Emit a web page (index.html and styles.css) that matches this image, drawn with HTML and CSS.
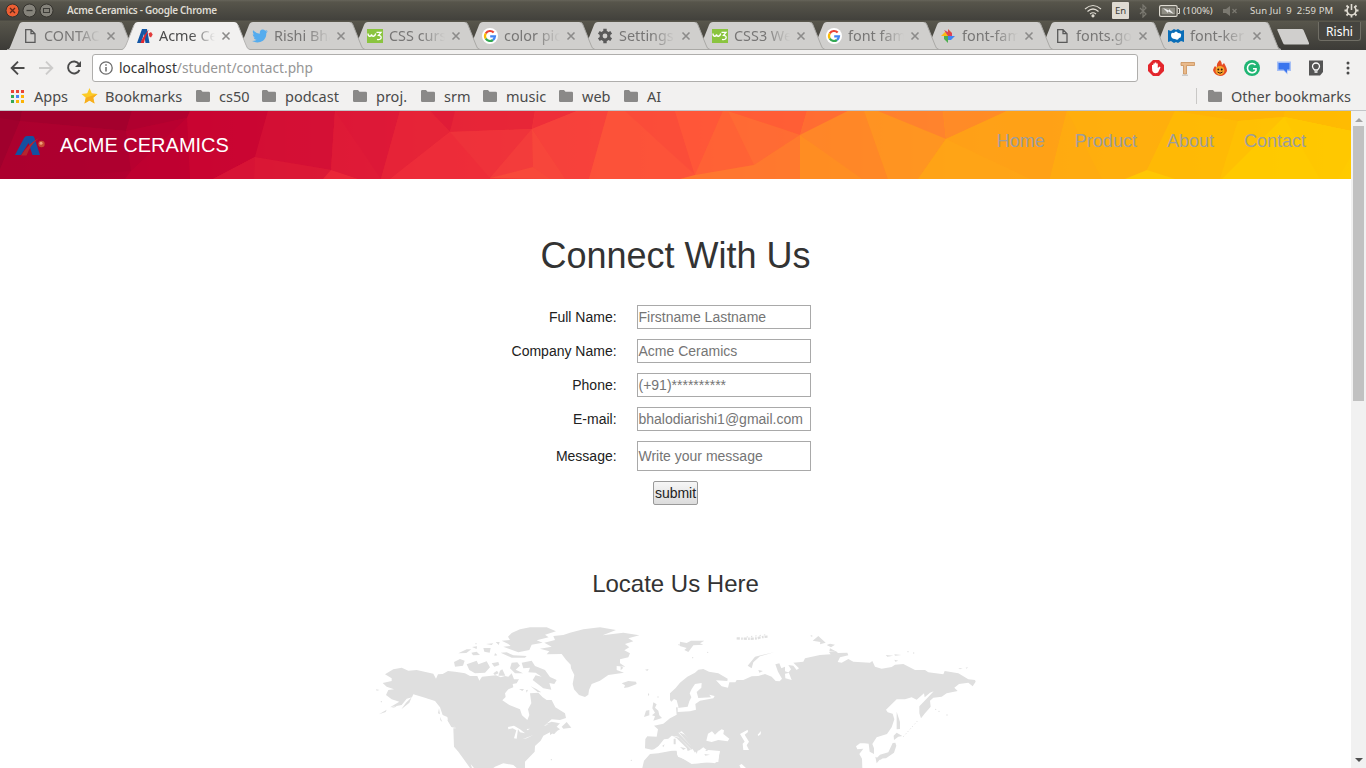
FILE: index.html
```html
<!DOCTYPE html>
<html lang="en">
<head>
<meta charset="utf-8">
<title>Acme Ceramics</title>
<link rel="stylesheet" href="styles.css">
</head>
<body>
<svg width="0" height="0" class="defs">
  <defs>
    <symbol id="tab" viewBox="0 0 128 28"><path d="M0 28C3 27 3 25 4 23L12 3Q13 0 16 0H112Q115 0 116 3L124 23Q125 27 128 28Z" fill="#d0cfcd"/><path d="M0 27.5H128M114 .5Q115.500 1 116 3L124 23Q125 27 128 27.500" fill="none" stroke="#aaa9a6"/></symbol>
    <symbol id="tab-on" viewBox="0 0 128 28"><path d="M0 28C3 27 3 25 4 23L12 3Q13 0 16 0H112Q115 0 116 3L124 23Q125 27 128 28Z" fill="#f2f1f0"/><path d="M0 27.500Q3 26 4 23L12 3M116 3L124 23Q125 27 128 27.500" fill="none" stroke="#b5b4b2"/></symbol>
    <symbol id="close" viewBox="0 0 10 10"><path d="M1.500 1.500L8.500 8.500M8.500 1.500L1.500 8.500" stroke="#8c8b8a" stroke-width="1.600"/></symbol>
    <symbol id="page" viewBox="0 0 16 16"><path d="M3.700 1.700H9L13 5.700V14.300H3.700ZM9 1.700V5.700H13" fill="none" stroke="#5a5a5a" stroke-width="1.300"/></symbol>
    <symbol id="acme" viewBox="0 0 30 20"><path d="M0 19L9 2Q10 0 12 0H17.500Q19 0 19.500 2L25 19H17.500L13.500 7L6 19Z" fill="#1450a0"/><path d="M6 19.500Q14 7 24 2Q15 9 11.500 19.500Z" fill="#b5252e"/><circle cx="26.500" cy="8" r="3.200" fill="#c94b35"/><circle cx="26" cy="7.200" r="1.500" fill="#efa27c"/></symbol>
    <symbol id="acme-tab" viewBox="0 0 16 16"><path d="M0 15L5 1H10L12.500 15H8.500L7 6L4 15Z" fill="#1457a5"/><path d="M3.500 15Q6 8 12 1.500Q8 9 7 15Z" fill="#e02830"/><path d="M11.500 5.500L14 4L15.700 6.500L14 9.500L12.300 8.500Z" fill="#e23b3b"/></symbol>
    <symbol id="w3" viewBox="0 0 16 16"><path d="M0 1H16V15H0Z" fill="#8ac43f"/><path d="M1 5.500C1 9 4 9 4.500 6.500C5 9 8 9 8.700 5.500M9.500 4.300H14L11.500 7.300C15.500 7.300 15 12.700 10 11.300" fill="none" stroke="#fff" stroke-width="1.300"/></symbol>
    <symbol id="google" viewBox="0 0 16 16"><circle cx="8" cy="8" r="8" fill="#fff"/><g fill="none" stroke-width="2.200"><path d="M11.700 4.600A5 5 0 0 0 3.800 5.300" stroke="#ea4335"/><path d="M3.800 5.300A5 5 0 0 0 3.800 10.700" stroke="#fbbc05"/><path d="M3.800 10.700A5 5 0 0 0 11 12" stroke="#34a853"/><path d="M11 12A5 5 0 0 0 13 8.300H8.200" stroke="#4285f4"/></g></symbol>
    <symbol id="folder" viewBox="0 0 14 12"><path d="M0 1.200Q0 0 1.200 0H5L6.500 1.700H12.800Q14 1.700 14 2.900V10.800Q14 12 12.800 12H1.200Q0 12 0 10.800Z" fill="#8a8988"/></symbol>
  </defs>
</svg>

<header class="titlebar">
  <svg class="winbtns" width="56" height="21" viewBox="0 0 56 21"><circle cx="12.500" cy="10.500" r="6.500" fill="#ec5e33" stroke="#35332e"/><path d="M10 8L15 13M15 8L10 13" stroke="#61281a" stroke-width="1.300"/><circle cx="29.500" cy="10.500" r="6.500" fill="#85837b" stroke="#35332e"/><path d="M26.500 10.500H32.500" stroke="#3d3c38" stroke-width="1.300"/><circle cx="46.500" cy="10.500" r="6.500" fill="#85837b" stroke="#35332e"/><rect x="43.500" y="8.500" width="6" height="4" fill="none" stroke="#3d3c38"/></svg>
  <span class="wintitle">Acme Ceramics - Google Chrome</span>
  <div class="tray">
    <svg width="18" height="14" viewBox="0 0 18 14" fill="none" stroke="#dfdbd2" stroke-width="1.200"><path d="M1 5Q9-2 17 5M3.500 7.500Q9 2.500 14.500 7.500M6 10Q9 7.500 12 10"/><circle cx="9" cy="11.800" r="1" fill="#dfdbd2"/></svg>
    <span class="lang">En</span>
    <svg class="bt" width="8" height="14" viewBox="0 0 8 14" fill="none" stroke="#7b7971" stroke-width="1.200"><path d="M1 4L7 10L4 13V1L7 4L1 10"/></svg>
    <svg class="bat" width="21" height="12" viewBox="0 0 21 12"><rect x=".6" y=".6" width="17.500" height="10.800" rx="1.500" fill="none" stroke="#dfdbd2" stroke-width="1.200"/><rect x="2.500" y="2.500" width="13.700" height="7" fill="#8f8d84"/><path d="M19 3.500H20.500V8.500H19" fill="none" stroke="#dfdbd2"/><path d="M4 3L10 5.500V4L15 9L9 6.500V8Z" fill="#eee"/></svg>
    <span class="pct">(100%)</span>
    <svg class="vol" width="15" height="10" viewBox="0 0 15 10"><path d="M0 3H3L7 0V10L3 7H0Z" fill="#7b7971"/><path d="M9.500 3L13.500 7M13.500 3L9.500 7" stroke="#7b7971" stroke-width="1.200"/></svg>
    <span class="clock">Sun Jul&nbsp; 9&nbsp; 2:59 PM</span>
    <svg class="gear" width="15" height="15" viewBox="0 0 15 15" fill="none" stroke="#dfdbd2"><path d="M5 3.700A4.500 4.500 0 1 0 10 3.700M7.500 1V7" stroke-width="1.600"/><path d="M.5 7.500H3M12 7.500H14.500M7.500 12V14.500M2.500 2.500L4.300 4.300M12.500 2.500L10.700 4.300M2.500 12.500L4.300 10.700M12.500 12.500L10.700 10.700" stroke-width="1.800"/></svg>
  </div>
</header>

<nav class="tabstrip">
  <div class="tab t1"><svg class="shape"><use href="#tab"/></svg><svg class="fav"><use href="#page"/></svg><span>CONTACT</span><svg class="x"><use href="#close"/></svg></div>
  <div class="tab active"><svg class="shape"><use href="#tab-on"/></svg><svg class="fav"><use href="#acme-tab"/></svg><span>Acme Cer</span><svg class="x"><use href="#close"/></svg></div>
  <div class="tab t3"><svg class="shape"><use href="#tab"/></svg><svg class="fav" viewBox="0 0 16 16"><path d="M0 13Q3 13 4.500 11.700Q2.200 11.500 1.600 9.500H3Q.7 8.500.7 6.200L2.100 6.500Q.1 4.500 1.200 2.200Q4 5.500 7.800 5.700Q7.500 2 10.500 1.600Q12 1.500 13.200 2.700L15.300 1.900L14 3.700L16 3.300L14.300 5Q14.500 10 11 12.700Q6 16 0 13Z" fill="#55acee"/></svg><span>Rishi Bha</span><svg class="x"><use href="#close"/></svg></div>
  <div class="tab t4"><svg class="shape"><use href="#tab"/></svg><svg class="fav"><use href="#w3"/></svg><span>CSS curs</span><svg class="x"><use href="#close"/></svg></div>
  <div class="tab t5"><svg class="shape"><use href="#tab"/></svg><svg class="fav"><use href="#google"/></svg><span>color pic</span><svg class="x"><use href="#close"/></svg></div>
  <div class="tab t6"><svg class="shape"><use href="#tab"/></svg><svg class="fav" viewBox="0 0 16 16"><circle cx="8" cy="8" r="3.900" fill="none" stroke="#5a5a5a" stroke-width="3"/><path d="M8 .8V4M8 12V15.200M1.800 4.400L4.500 6M11.500 10L14.200 11.600M1.800 11.600L4.500 10M11.500 6L14.200 4.400" stroke="#5a5a5a" stroke-width="3.400"/></svg><span>Settings</span><svg class="x"><use href="#close"/></svg></div>
  <div class="tab near t7"><svg class="shape"><use href="#tab"/></svg><svg class="fav"><use href="#w3"/></svg><span>CSS3 We</span><svg class="x"><use href="#close"/></svg></div>
  <div class="tab near t8"><svg class="shape"><use href="#tab"/></svg><svg class="fav"><use href="#google"/></svg><span>font fam</span><svg class="x"><use href="#close"/></svg></div>
  <div class="tab near t9"><svg class="shape"><use href="#tab"/></svg><svg class="fav" viewBox="0 0 16 16"><path d="M8 8V1L12 5V8Z" fill="#e04a3f"/><path d="M8 8H15L11 12H8Z" fill="#4285f4"/><path d="M8 8V15L4 11V8Z" fill="#4caf50"/><path d="M8 8H1L5 4H8Z" fill="#fbb917"/><path d="M4 2L8 4V8ZM12 5L12 8H8Z" fill="#d84060"/></svg><span>font-fam</span><svg class="x"><use href="#close"/></svg></div>
  <div class="tab near t10"><svg class="shape"><use href="#tab"/></svg><svg class="fav"><use href="#page"/></svg><span>fonts.go</span><svg class="x"><use href="#close"/></svg></div>
  <div class="tab near t11"><svg class="shape"><use href="#tab"/></svg><svg class="fav" viewBox="0 0 16 16"><path d="M0 2L3 3L6 1L8 2L10 1L13 3L16 2V14L13 13L10 15L8 14L6 15L3 13L0 14Z" fill="#0a6eb8"/><path d="M3 7Q3 4 6 5Q8 2 10 5Q14 5 13 8Q13 10 11 10Q10 13 7 11Q3 11 3 7Z" fill="#fff"/></svg><span>font-ker</span><svg class="x"><use href="#close"/></svg></div>
  <svg class="newtab" width="33" height="16" viewBox="0 0 33 16"><path d="M1 0H24.500Q26 0 26.500 1L32 14Q32.500 15.500 31 15.500H8Q6.500 15.500 6 14L.3 1Q0 0 1 0Z" fill="#d0cfcd"/></svg>
  <span class="user">Rishi</span>
</nav>

<div class="toolbar">
  <svg width="84" height="28" viewBox="0 0 84 28" fill="none" stroke-width="1.900"><path d="M24.500 14H12M18 7.700L11.700 14L18 20.300" stroke="#4a4a4a"/><path d="M39 14H51.500M46 7.700L52.300 14L46 20.300" stroke="#cccbca"/><path d="M79 10A6 6 0 1 0 79.500 16" stroke="#4a4a4a"/><path d="M81 7V13H75Z" fill="#4a4a4a"/></svg>
  <div class="omnibox"><svg width="14" height="14" viewBox="0 0 14 14"><circle cx="7" cy="7" r="6.200" fill="none" stroke="#6b6b6b" stroke-width="1.300"/><path d="M7 6V10.500M7 3.200V4.800" stroke="#6b6b6b" stroke-width="1.500"/></svg><span class="url"><b>localhost</b>/student/contact.php</span></div>
  <div class="exts">
    <svg viewBox="0 0 16 16"><path d="M5 0H11L16 5V11L11 16H5L0 11V5Z" fill="#e3262c"/><path d="M4 8V5H5.300V7V3.500H6.800V7V2.500H8.300V7V3.500H9.800V8L11.500 6.500L12.500 7.500L10 12.500Q6 14.500 4.300 11Z" fill="#fff"/></svg>
    <svg viewBox="0 0 16 16"><path d="M1 2.500H14.500V5.500H6.500V14H3.500V5.500H1Z" fill="#e9b98a" stroke="#c98f57" stroke-width=".8"/><path d="M2 15.200H8" stroke="#bbb"/></svg>
    <svg viewBox="0 0 16 16"><path d="M8 0Q10 2 10 5L12 3Q15 8 15 11Q13 16 8 16Q2 15 1 10Q2 7 3 6L5 8Q4 3 8 0Z" fill="#e54b23"/><circle cx="8" cy="10.500" r="4.500" fill="#f7a52c"/><circle cx="6.300" cy="9.500" r="1" fill="#331b10"/><circle cx="9.700" cy="9.500" r="1" fill="#331b10"/><path d="M5.500 12Q8 14.500 10.500 12" stroke="#331b10" fill="none"/></svg>
    <svg viewBox="0 0 16 16"><circle cx="8" cy="8" r="8" fill="#1fb573"/><path d="M11.500 5A4.600 4.600 0 1 0 12 10.500V8.700H9" stroke="#fff" stroke-width="1.600" fill="none"/></svg>
    <svg viewBox="0 0 16 16"><path d="M1 1.500H15V11H11.500V14.500L8 11H1Z" fill="#a7c0f5"/><path d="M2.500 3H13.500V9.500H11V13L7.500 9.500H2.500Z" fill="#3974ee"/></svg>
    <svg viewBox="0 0 16 16"><path d="M1 .5H15V12L12 15.500H1Z" fill="#555"/><path d="M6.500 10C5 8.500 4.500 8 4.500 6.500A3.500 3.500 0 0 1 11.500 6.500C11.500 8 11 8.500 9.500 10ZM6.500 12H9.500" fill="none" stroke="#fff" stroke-width="1.300"/></svg>
    <svg viewBox="0 0 16 16" fill="#4a4a4a"><circle cx="8" cy="3" r="1.500"/><circle cx="8" cy="8" r="1.500"/><circle cx="8" cy="13" r="1.500"/></svg>
  </div>
</div>

<div class="bookmarks">
  <svg class="apps" width="13" height="13" viewBox="0 0 13 13"><path d="M0 0H3V3H0ZM5 0H8V3H5ZM10 0H13V3H10Z" fill="#ea4335"/><path d="M0 5H3V8H0ZM0 10H3V13H0Z" fill="#34a853"/><path d="M5 5H8V8H5Z" fill="#4285f4"/><path d="M10 5H13V8H10ZM5 10H8V13H5ZM10 10H13V13H10Z" fill="#fbb305"/></svg>
  <span class="w-apps">Apps</span>
  <svg class="star" width="17" height="16" viewBox="0 0 17 16"><path d="M8.500 0L10.800 5.300L16.500 5.900L12.200 9.700L13.500 15.500L8.500 12.500L3.500 15.500L4.800 9.700L.5 5.900L6.200 5.300Z" fill="#fccb27"/><path d="M8.500 12.500L3.500 15.500L4.800 9.700L16.500 5.900L12.200 9.700L13.500 15.500Z" fill="#f7ad1e"/></svg>
  <span class="w-bm">Bookmarks</span>
  <svg class="folder"><use href="#folder"/></svg><span class="w-cs">cs50</span>
  <svg class="folder"><use href="#folder"/></svg><span class="w-pod">podcast</span>
  <svg class="folder"><use href="#folder"/></svg><span class="w-proj">proj.</span>
  <svg class="folder"><use href="#folder"/></svg><span class="w-srm">srm</span>
  <svg class="folder"><use href="#folder"/></svg><span class="w-mus">music</span>
  <svg class="folder"><use href="#folder"/></svg><span class="w-web">web</span>
  <svg class="folder"><use href="#folder"/></svg><span class="w-ai">AI</span>
  <div class="other"><svg class="folder"><use href="#folder"/></svg><span>Other bookmarks</span></div>
</div>

<div class="viewport">
<main>
  <div class="banner">
    <svg class="poly" viewBox="0 0 1351 68" preserveAspectRatio="none">
      <defs><linearGradient id="bg"><stop offset="0" stop-color="#a2002e"/><stop offset=".1" stop-color="#b40030"/><stop offset=".14" stop-color="#c20030"/><stop offset=".3" stop-color="#e92a39"/><stop offset=".5" stop-color="#ff5838"/><stop offset=".7" stop-color="#ff9d1a"/><stop offset="1" stop-color="#ffcb00"/></linearGradient></defs>
      <path d="M0 0H1351V68H0Z" fill="url(#bg)"/>
      <g opacity=".88">
      <path d="M0 0H22L20 10L0 58Z" fill="#a0002d"/><path d="M0 0H22L20 10L0 7Z" fill="#98002b"/><path d="M22 0H132L126 20L20 10Z" fill="#a3002d"/><path d="M20 10L126 20L131 60L28 68H0V58Z" fill="#ae002f"/><path d="M132 0H190L187 7L126 20Z" fill="#b0002f"/><path d="M126 20L187 7L131 60Z" fill="#b90030"/>
      <path d="M187 7L190 68H125L131 60Z" fill="#c00030"/>
      <path d="M187 7L190 0H268L255 46L213 68H190Z" fill="#ca0532"/><path d="M268 0H335L331 59L255 46Z" fill="#d40f35"/><path d="M213 68L255 46L331 59L323 68Z" fill="#dc1936"/><path d="M255 46L254 68H213Z" fill="#d91536"/>
      <path d="M335 0H400L381 68H358L331 59Z" fill="#dd1737"/><path d="M335 0L381 68H358L331 59Z" fill="#df1a37"/><path d="M400 0H430L450 21L390 68H381Z" fill="#e62337"/><path d="M323 68L331 59L358 68Z" fill="#ec2939"/><path d="M430 0H457L450 21Z" fill="#df1a37"/>
      <path d="M455 0H535L532 18L450 21Z" fill="#e62337"/><path d="M450 21L532 18L490 67Z" fill="#ef323b"/><path d="M450 21L490 67V68H390Z" fill="#ee2c3a"/><path d="M535 0H577L532 18Z" fill="#ee2c3a"/><path d="M577 0H608L589 68H565L532 18Z" fill="#f7413c"/><path d="M532 18L533 56L490 67Z" fill="#f43c3c"/><path d="M532 18L565 68H548L533 56Z" fill="#f8473c"/><path d="M490 67L533 56L550 68Z" fill="#f94b3b"/>
      <path d="M608 0H630L695 64L680 68H589Z" fill="#fd533a"/><path d="M625 0H675L695 64Z" fill="#fb4c3a"/><path d="M675 0H723L695 64Z" fill="#ff5639"/><path d="M723 0H732L754 54L695 64Z" fill="#ff6236"/><path d="M728 0L800 24L754 54Z" fill="#ff6b35"/><path d="M728 0H807L800 24Z" fill="#ff5b37"/><path d="M807 0H848L800 24Z" fill="#ff6b34"/><path d="M800 24V68H757L754 54ZM680 68L695 64L754 54L757 68Z" fill="#ff7a2f"/>
      <path d="M800 24L848 0H864L888 68H860Z" fill="#ff8828"/><path d="M800 24V68H862Z" fill="#ff9022"/><path d="M864 0H878L946 28L918 68H888Z" fill="#ff9522"/><path d="M878 0H943L946 28Z" fill="#ff8030"/><path d="M943 0H1007L946 28Z" fill="#ff8929"/><path d="M946 28L1007 0H1067L1050 68H918Z" fill="#ffa117"/><path d="M946 28L1030 68H918Z" fill="#ffa516"/>
      <path d="M1067 0H1175L1147 59L1125 68H1050Z" fill="#ffaf0d"/><path d="M1067 0L1102 68H1050Z" fill="#ffab10"/><path d="M1175 0L1238 10L1220 68H1175L1147 59Z" fill="#ffba05"/><path d="M1125 68L1147 59L1175 68Z" fill="#ffca02"/><path d="M1175 0H1285L1284 6L1238 10Z" fill="#ffb307"/><path d="M1285 0H1351V20L1284 6Z" fill="#ffb903"/><path d="M1238 10L1284 6L1222 68H1220Z" fill="#ffc103"/><path d="M1284 6L1351 20V68H1222Z" fill="#ffcb00"/><path d="M1284 6L1351 20V45L1338 68H1320Z" fill="#ffc800"/>
      </g>
    </svg>
    <svg class="logo"><use href="#acme"/></svg>
    <span class="brand">ACME CERAMICS</span>
    <div class="links"><a>Home</a><a>Product</a><a>About</a><a>Contact</a></div>
  </div>
  <h1>Connect With Us</h1>
  <form>
    <label>Full Name:</label><input placeholder="Firstname Lastname">
    <label>Company Name:</label><input placeholder="Acme Ceramics">
    <label>Phone:</label><input placeholder="(+91)**********">
    <label>E-mail:</label><input placeholder="bhalodiarishi1@gmail.com">
    <label>Message:</label><input class="msg" placeholder="Write your message">
  </form>
  <button class="submit" type="button">submit</button>
  <h3>Locate Us Here</h3>
  <svg class="map" viewBox="0 0 1830 444">
    <g fill="#dfdfdf">
      <path d="M45 163L70 148L95 143L115 152L140 150L190 161L198 176L204 163L218 162L234 153L255 155L285 160L300 168L322 168L328 182L336 170L378 166L392 172L405 168L415 170L425 160L432 178L447 178L440 190L428 192L430 202L415 208L405 220L407 231L397 241L418 255L450 268L456 286L472 300L478 285L474 268L484 250L480 220L505 218L518 232L530 240L545 240L556 262L585 280L588 294L570 300L545 298L522 318L550 308L570 310L560 320L570 328L540 345L540 337L520 347L512 362L495 378L494 395L465 425L465 444H440L430 435L400 430L375 440L370 444H312L302 432L306 444H300L290 430L265 395L252 380L250 325L258 325L235 305L232 291L218 285L210 262L195 243L160 232L130 223L126 232L110 236L95 255L60 262L88 245L65 238L48 225L55 210L72 208L50 200L38 189L65 183L65 175Z"/>
      <path d="M510 86L545 80L523 68L555 60L550 48L580 45L600 38L640 28L690 22L738 30L698 46L760 38L808 46L775 55L790 64L765 72L778 82L763 91L780 100L775 112L750 118L750 130L766 140L740 138L740 150L762 158L715 165L690 182L665 192L657 210L655 224L645 231L627 225L612 208L608 192L613 165L603 145L602 134L588 119L575 102L530 103L538 94Z"/>
      <path d="M395 62L420 60L414 50L425 39L450 28L480 22L530 22L558 34L525 44L536 52L500 61L518 68L485 74L478 90L445 97L400 80L422 78L415 72Z"/>
      <path d="M252 126L270 117L284 122L279 137L255 140ZM290 133L320 122L325 133L350 124L360 142L345 158L315 160L298 150ZM365 130L385 126L388 135L373 140ZM390 152L397 148L406 167L385 167ZM370 160L381 152L386 160L374 165ZM392 98L410 97L430 106L470 108L465 113L425 113ZM425 128L442 127L450 137L437 149L459 160L435 160L420 145ZM455 128L485 122L495 138L525 150L540 171L560 180L553 192L538 189L544 209L520 205L488 180L497 166L515 170L497 158L475 157L480 143L460 145ZM265 100L290 88L304 88L289 99ZM304 98L320 95L330 105L309 106ZM348 72L370 70L365 75ZM340 84L362 84L359 98L343 95ZM377 66L389 66L386 75ZM482 199L500 208L514 217L503 216ZM306 81L321 79L320 87ZM375 99L382 106L373 107ZM575 320L590 306L604 323L580 326ZM525 313L545 305L565 309L540 315ZM545 338L562 332L552 343ZM27 283L50 269L47 276ZM63 264L85 254L75 262ZM94 268L108 248L125 232L118 248ZM18 208L29 210L20 212ZM207 265L210 283L204 280ZM210 290L217 306L211 301ZM230 297L257 324L244 321ZM447 207L462 207L457 213ZM468 211L474 209L470 218Z"/>
      <path d="M755 190L775 183L798 185L800 192L775 202L762 204L765 196ZM847 265L850 247L860 253L855 263L865 272L868 286L876 294L850 302L855 289L846 286L855 278ZM822 291L828 272L838 270L838 286ZM834 218L838 224L834 228ZM825 149L836 147L832 153ZM752 138L760 143L752 151Z"/>
      <path d="M900 240L900 220L917 204L930 188L952 170L975 158L985 149L1000 147L1017 155L1045 160L1073 176L1072 183L1038 181L1055 199L1074 203L1078 187L1096 187L1100 180L1120 180L1145 169L1165 168L1185 162L1205 170L1217 183L1229 184L1236 176L1224 155L1216 133L1228 130L1234 145L1245 140L1245 154L1258 158L1245 161L1246 175L1265 180L1256 157L1263 148L1255 135L1270 137L1280 150L1287 145L1270 128L1300 125L1305 115L1350 105L1382 103L1377 96L1398 94L1404 99L1432 98L1435 106L1410 112L1403 126L1415 128L1435 117L1450 125L1500 128L1507 123L1515 140L1535 146L1565 141L1575 134L1600 132L1635 150L1665 150L1675 157L1720 163L1724 153L1765 160L1795 178L1815 180L1817 185L1808 199L1795 188L1767 192L1753 203L1763 213L1730 220L1715 230L1690 233L1680 242L1682 260L1665 280L1653 295L1648 280L1648 259L1672 234L1691 214L1680 218L1664 232L1662 220L1640 239L1625 232L1605 238L1580 238L1548 269L1553 277L1568 281L1573 298L1565 322L1551 342L1520 352L1507 372L1512 385L1512 402L1499 395L1496 371L1483 370L1470 370L1458 379L1462 388L1480 386L1468 402L1476 416L1477 444H817L822 422L840 402L865 400L905 392L920 392L922 406L965 432L990 430L1005 425L1035 430L1045 418L1050 393L1015 390L1000 400L985 397L975 385L945 344L935 334L925 338L955 370L970 384L965 389L925 350L905 347L895 356L882 358L868 375L860 387L845 389L825 385L826 357L832 349L860 350L864 328L852 317L880 311L900 295L920 284L918 262L926 263L920 241L912 237L904 245Z"/>
      <path d="M1133 137L1155 110L1212 97L1170 109L1150 127L1145 145ZM1165 150L1179 153L1168 158ZM1580 275L1590 306L1590 327L1580 328ZM1571 347L1580 338L1597 348L1585 350L1572 360ZM1576 368L1579 377L1572 398L1548 415L1518 416L1530 404L1555 397L1568 369ZM1516 410L1530 418L1520 430ZM1525 412L1545 412L1530 420ZM930 65L950 69L963 62L1003 62L990 70L1000 74L970 76L955 96L943 90L950 84L929 78ZM1328 62L1345 48L1367 68L1350 73L1351 66ZM1370 75L1380 71L1395 74L1383 82ZM1380 85L1400 95L1378 94ZM1547 105L1570 107L1552 110ZM1573 103L1594 105L1575 107ZM1573 119L1585 122L1576 125ZM1765 145L1778 145L1770 148ZM1787 143L1794 142L1790 146ZM1322 45L1329 48L1323 50Z"/>
      <circle cx="544" cy="419" r="2"/><circle cx="784" cy="421" r="2"/><circle cx="1697" cy="268" r="2"/><circle cx="1707" cy="274" r="2"/><circle cx="1731" cy="285" r="2"/><circle cx="1614" cy="95" r="2"/><circle cx="1631" cy="99" r="2"/><circle cx="968" cy="113" r="2"/><circle cx="1013" cy="97" r="2"/><circle cx="34" cy="245" r="2"/><circle cx="318" cy="71" r="2"/><circle cx="864" cy="231" r="2"/><circle cx="927" cy="74" r="2"/>
      <g fill="none" stroke="#dfdfdf"><path d="M1600 350L1645 300" stroke-width="3" stroke-dasharray="3 7"/><path d="M1100 55Q1150 58 1165 54Q1180 50 1195 50" stroke-width="7" stroke-dasharray="9 4 5 3"/><path d="M1130 51L1190 44" stroke-width="3" stroke-dasharray="4 9"/></g>
    </g>
    <g fill="#fff">
      <path d="M975 192L995 189L994 203L980 216L985 234L1023 232L1018 224L1034 228L1030 235L990 242L976 252L978 269L960 274L923 276L923 264L953 260L958 244L964 232L959 220L965 207Z"/>
      <path d="M1009 362L1014 341L1026 334L1035 344L1046 334L1055 328L1062 331L1060 342L1078 356L1073 364L1045 360L1025 366Z"/><path d="M1110 342L1133 329L1134 336L1124 344L1137 365L1130 376L1137 390L1120 390L1118 371L1124 365Z"/><path d="M1163 344L1173 333L1172 343L1165 348ZM1108 436L1115 432L1128 444H1112ZM985 393L1000 382L1010 390L993 399Z"/>
      <path d="M850 389L905 350L930 357L960 389L1000 393L1048 394L1045 426L975 430L924 410L920 389L865 397Z"/>
      <path d="M414 321L432 317L450 328L465 340L450 337L444 328L440 356L432 355L439 331L428 325L415 328ZM457 358L490 345L470 355ZM470 327L480 326L472 331Z"/>
    </g>
    <path fill="#dfdfdf" d="M907 348L928 353L963 389L953 393L950 384L920 355ZM925 335L945 344L983 386L975 398L960 375ZM877 377L884 373L880 382ZM911 356L917 356L917 373L911 373ZM930 381L948 385L940 390ZM1003 402L1020 404L1006 407ZM974 383L985 386L980 402Z"/>
  </svg>
</main>
<aside class="scroll"><i class="up"></i><div class="thumb"></div><i class="down"></i></aside>
</div>
</body>
</html>
```
FILE: styles.css
```css
* { box-sizing: border-box; }
body { margin: 0; width: 1366px; height: 768px; overflow: hidden; display: flex; flex-direction: column; background: #fff; font-family: "Liberation Sans", Arial, sans-serif; }
svg { display: block; flex: none; }
.defs { position: absolute; }

.titlebar { height: 22px; flex: none; display: flex; align-items: flex-start; background: linear-gradient(#66645a 0, #57554b 2px, #42413c 20px, #59574c 21px); font-family: "Noto Sans", sans-serif; color: #dfdbd2; }
.wintitle { margin-left: 11px; width: 151px; white-space: nowrap; font-size: 10px; font-weight: 600; letter-spacing: -.3px; line-height: 20px; }
.tray { margin-left: auto; display: flex; align-items: center; height: 21px; padding-right: 7px; font-size: 9.500px; white-space: nowrap; }
.lang { margin-left: 10px; width: 17px; height: 17px; line-height: 17px; border-radius: 1px; background: #dfdbd2; color: #3c3b37; text-align: center; }
.bt { margin-left: 10px; }
.bat { margin-left: 12px; }
.pct { margin-left: 3px; width: 31px; letter-spacing: -.05px; }
.vol { margin-left: 9px; }
.clock { margin-left: 12px; width: 84px; letter-spacing: .1px; }
.gear { margin-left: 10px; }

.tabstrip { height: 28px; flex: none; display: flex; padding-left: 7px; background: linear-gradient(#57554b, #3c3b37); font-family: "Noto Sans", sans-serif; }
.tab { position: relative; width: 128px; margin-right: -13px; height: 28px; flex: none; display: flex; align-items: center; padding-left: 15px; }
.tab.near { margin-right: -14px; }
.shape { position: absolute; left: 0; top: 0; width: 128px; height: 28px; }
.tab .fav { position: relative; width: 16px; height: 16px; }
.tab span { position: relative; margin-left: 6px; width: 62px; white-space: nowrap; font-size: 14.400px; line-height: 26px; color: #777675; -webkit-mask-image: linear-gradient(90deg, #000 32px, transparent 56px); mask-image: linear-gradient(90deg, #000 32px, transparent 56px); }
.tab .x { position: relative; width: 10px; height: 10px; }
.tab.active { z-index: 20; }
.tab.active span { color: #4c4c4c; }
.t1 { z-index: 12; } .t3 { z-index: 11; } .t4 { z-index: 10; } .t5 { z-index: 9; } .t6 { z-index: 8; }
.t7 { z-index: 7; } .t8 { z-index: 6; } .t9 { z-index: 5; } .t10 { z-index: 4; } .t11 { z-index: 3; }
.newtab { margin: 7px 0 0 10px; }
.user { margin: 0 5px 0 auto; width: 43px; height: 19px; border: 1px solid #706e65; border-top: 0; border-radius: 0 0 3px 3px; background: #45443f; color: #fff; font-size: 12px; line-height: 20px; text-align: center; }

.toolbar { height: 36px; flex: none; display: flex; padding: 4px 10px 4px 0; background: #f2f1f0; }
.omnibox { margin-left: 8px; width: 1046px; height: 28px; display: flex; align-items: center; padding-left: 6px; border: 1px solid #afaeac; border-radius: 3px; background: #fff; }
.url { margin-left: 6px; padding-bottom: 1px; font: 13.700px "Noto Sans", sans-serif; color: #969696; white-space: nowrap; }
.url b { font-weight: 400; color: #333; }
.exts { margin-left: 10px; display: flex; align-items: center; gap: 16px; }
.exts svg { width: 16px; height: 16px; }

.bookmarks { height: 25px; flex: none; display: flex; align-items: center; padding: 0 14px 4px 11px; background: #f2f1f0; border-bottom: 1px solid #c3c5c8; font: 14.500px/20px "Noto Sans", sans-serif; color: #4a4a4a; white-space: nowrap; }
.apps { margin-right: 10px; }
.star { margin: 0 7px 0 12px; }
.folder { width: 14px; height: 12px; margin: 0 9px 0 13px; }
.w-apps { width: 35px; } .w-bm { width: 78px; } .w-cs { width: 30px; } .w-pod { width: 55px; } .w-proj { width: 32px; }
.w-srm { width: 26px; } .w-mus { width: 40px; } .w-web { width: 29px; } .w-ai { width: 15px; }
.other { margin-left: auto; display: flex; align-items: center; height: 16px; border-left: 1px solid #c9c8c6; }
.other .folder { margin-left: 11px; }
.other span { width: 121px; }

.viewport { flex: 1; min-height: 0; display: flex; }
main { width: 1351px; overflow: hidden; color: #333; font-size: 14px; }
.banner { position: relative; height: 68px; display: flex; align-items: flex-start; padding: 0 45px 0 15px; }
.poly { position: absolute; left: 0; top: 0; width: 1351px; height: 68px; }
.logo { position: relative; width: 30px; height: 20px; margin-top: 25px; }
.brand { position: relative; margin: 23px 0 0 15px; font-size: 20px; line-height: 23px; color: #fff; }
.links { position: relative; margin: 20px 0 0 auto; display: flex; gap: 30px; font-size: 18px; line-height: 20px; color: #9d9d9d; }
h1 { margin: 57px 0 0; font-size: 36px; font-weight: 400; line-height: 40px; text-align: center; }
form { margin: 29px 0 0 490px; display: grid; grid-template-columns: 126.600px 174px; column-gap: 20.400px; row-gap: 10px; align-items: center; }
label { text-align: right; line-height: 20px; color: #212121; }
input { width: 174px; height: 24px; padding: 1px .5px; border: 1px solid #a9a9a9; font: 14px "Liberation Sans", Arial, sans-serif; background: #fff; }
input::placeholder { color: #757575; }
.msg { height: 30px; }
.submit { display: block; margin: 10px 0 0 653px; width: 45px; height: 24px; padding: 0; border: 1px solid #999; border-radius: 2px; background: linear-gradient(#f6f6f6, #dcdcdc); font: 14px "Liberation Sans", Arial, sans-serif; color: #222; }
h3 { margin: 66px 0 0; font-size: 24px; font-weight: 400; line-height: 26px; text-align: center; }
.map { width: 610px; height: 148px; margin: 23px 0 0 370px; }
.scroll { width: 15px; background: #f1f1f1; display: flex; flex-direction: column; align-items: center; }
.up, .down { width: 0; height: 0; border: 4px solid transparent; }
.up { margin-top: 3px; border-bottom-color: #a3a3a3; }
.down { margin: auto 0 2px; border-top-color: #505050; }
.thumb { margin-top: 4px; width: 11px; height: 275px; background: #c1c1c1; }
```
